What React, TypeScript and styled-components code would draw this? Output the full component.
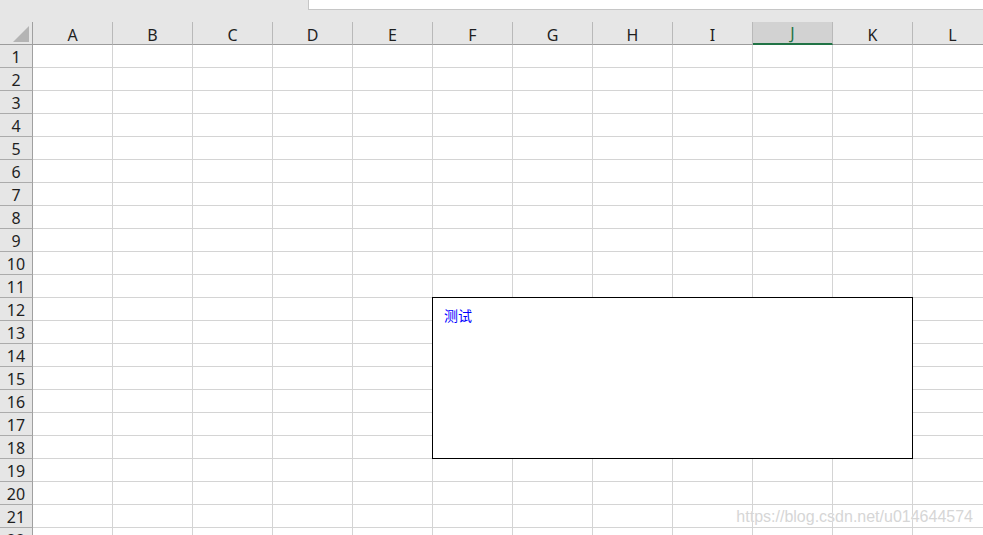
import React from "react";
import styled, { createGlobalStyle } from "styled-components";

const GlobalStyle = createGlobalStyle`
  html, body {
    margin: 0;
    padding: 0;
    background: #ffffff;
    overflow: hidden;
  }
  body {
    font-family: "Noto Sans", "Liberation Sans", sans-serif;
  }
`;

const COLUMNS = ["A", "B", "C", "D", "E", "F", "G", "H", "I", "J", "K", "L"];
const ROWS = Array.from({ length: 22 }, (_, i) => i + 1);
const SELECTED_COL = "J";

const Page = styled.div`
  position: relative;
  width: 983px;
  height: 535px;
  overflow: hidden;
  background: #ffffff;
`;

const TopStrip = styled.div`
  display: flex;
  align-items: flex-start;
  height: 22px;
  background: #e6e6e6;
`;

const StripSpacer = styled.div`
  width: 308px;
  flex: none;
`;

const FormulaBox = styled.div`
  flex: 1;
  height: 9px;
  background: #ffffff;
  border-left: 1px solid #c6c6c6;
  border-bottom: 1px solid #c6c6c6;
`;

const Sheet = styled.div`
  display: grid;
  grid-template-columns: 33px repeat(12, 80px);
  grid-auto-rows: 23px;
`;

const Corner = styled.div`
  background: #e6e6e6;
  border-right: 1px solid #a0a0a0;
  border-bottom: 1px solid #9c9c9c;
  box-sizing: border-box;
  display: flex;
  align-items: flex-end;
  justify-content: flex-end;
  padding: 0 3px 2px 0;
`;

const ColHeader = styled.div<{ $selected?: boolean }>`
  box-sizing: border-box;
  background: ${(p) => (p.$selected ? "#d2d2d2" : "#e6e6e6")};
  border-right: 1px solid #b9b9b9;
  border-bottom: ${(p) => (p.$selected ? "2px solid #217346" : "1px solid #9c9c9c")};
  color: ${(p) => (p.$selected ? "#217346" : "#1f1f1f")};
  font-size: 16px;
  line-height: 20px;
  padding-top: ${(p) => (p.$selected ? "1px" : "3px")};
  text-align: center;
`;

const RowHeader = styled.div`
  box-sizing: border-box;
  background: #e6e6e6;
  border-right: 1px solid #a0a0a0;
  border-bottom: 1px solid #ababab;
  color: #1f1f1f;
  font-size: 16px;
  line-height: 20px;
  padding-top: 2px;
  text-align: center;
`;

const Cell = styled.div`
  box-sizing: border-box;
  border-right: 1px solid #d4d4d4;
  border-bottom: 1px solid #d4d4d4;
  background: #ffffff;
`;

const TextBox = styled.div`
  position: absolute;
  left: 432px;
  top: 297px;
  width: 481px;
  height: 162px;
  box-sizing: border-box;
  border: 1px solid #000000;
  background: #ffffff;
  padding: 8px 11px;
  font-family: "Noto Sans CJK SC", sans-serif;
  font-size: 14px;
  line-height: 18px;
  color: #0000ff;
`;

const Watermark = styled.div`
  position: absolute;
  right: 10px;
  bottom: 9px;
  font-family: "Liberation Sans", Arial, sans-serif;
  font-size: 16px;
  line-height: 18px;
  color: #d6d6d6;
  text-shadow: 0 0 1px #ffffff;
  pointer-events: none;
`;

const CornerTriangle = () => (
  <svg width="16" height="16" viewBox="0 0 16 16">
    <polygon points="16,0 16,16 0,16" fill="#b4b4b4" />
  </svg>
);

export default function App() {
  return (
    <Page>
      <GlobalStyle />
      <TopStrip>
        <StripSpacer />
        <FormulaBox />
      </TopStrip>
      <Sheet>
        <Corner>
          <CornerTriangle />
        </Corner>
        {COLUMNS.map((c) => (
          <ColHeader key={c} $selected={c === SELECTED_COL}>
            {c}
          </ColHeader>
        ))}
        {ROWS.map((r) => (
          <React.Fragment key={r}>
            <RowHeader>{r}</RowHeader>
            {COLUMNS.map((c) => (
              <Cell key={c + r} />
            ))}
          </React.Fragment>
        ))}
      </Sheet>
      <TextBox>测试</TextBox>
      <Watermark>https://blog.csdn.net/u014644574</Watermark>
    </Page>
  );
}
